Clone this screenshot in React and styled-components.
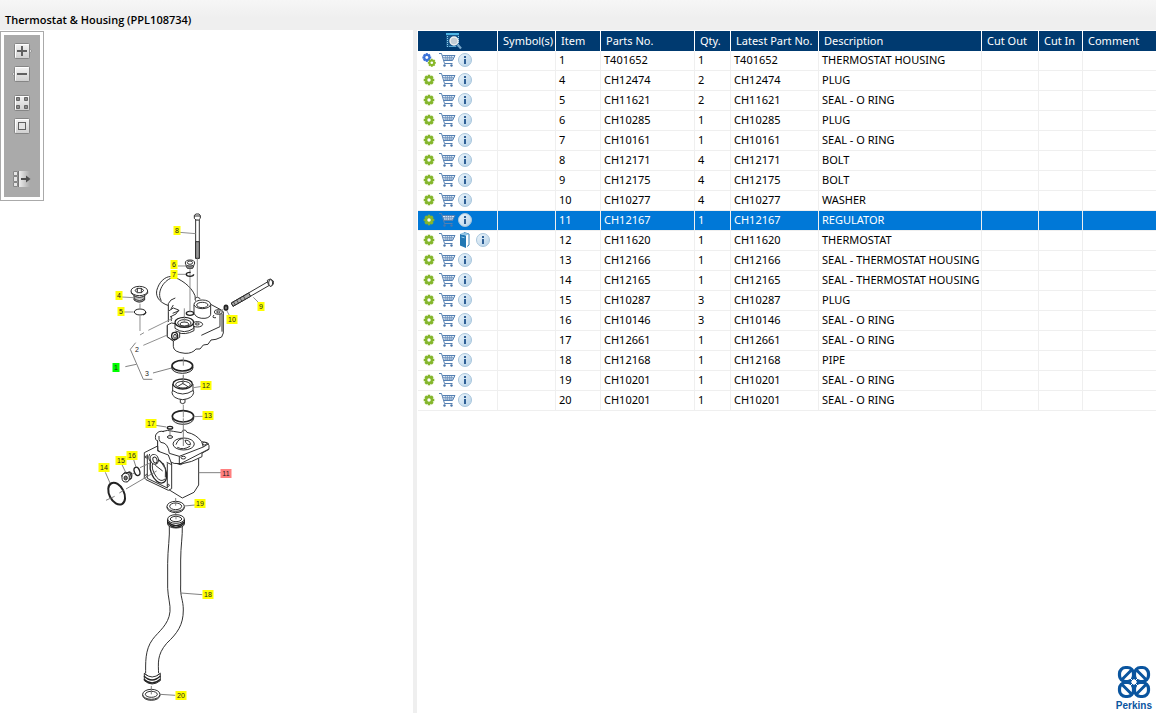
import React, { useState } from "react";
import styled, { createGlobalStyle } from "styled-components";

const GlobalStyle = createGlobalStyle`
  * {
    box-sizing: border-box;
  }

  body {
    margin: 0;
    background: #fff;
    color: #000;
    font-family: "Noto Sans", "Open Sans", sans-serif;
    font-size: 11px;
  }
`;

const Page = styled.div`
  min-height: 100vh;
  display: flex;
  flex-direction: column;
`;

const TitleBar = styled.header`
  height: 30px;
  padding: 10px 5px 0;
  background: linear-gradient(to bottom, #f6f6f6, #efefef 60%);
`;

const Title = styled.h1`
  margin: 0;
  font-family: "Open Sans", "Noto Sans", sans-serif;
  font-size: 11px;
  font-weight: 600;
  line-height: 20px;
  white-space: nowrap;
`;

const Main = styled.main`
  flex: 1;
  display: flex;
`;

const DrawingPane = styled.section`
  flex: 0 0 417px;
  display: flex;
  align-items: flex-start;
  border-right: 4px solid #efefef;
`;

const Toolbar = styled.div`
  width: 44px;
  flex: none;
  margin-top: 1px;
  padding: 3px;
  border: 1px solid #aaa;
  background: #fff;
`;

const ToolbarInner = styled.div`
  min-height: 162px;
  padding: 6px 0 8px;
  display: flex;
  flex-direction: column;
  align-items: center;
  gap: 9px;
  background: #aaa;
`;

const ToolGroup = styled.div`
  display: flex;
  flex-direction: column;
  gap: 3px;
  margin-top: ${props => (props.$last ? "auto" : "0")};
`;

const IconButton = styled.button`
  width: ${props => props.$size}px;
  height: ${props => props.$size}px;
  padding: 0;
  border: 0;
  background: none;
  display: flex;
  align-items: center;
  justify-content: center;
  cursor: pointer;

  svg {
    display: block;
    overflow: visible;
  }
`;

const Drawing = styled.svg`
  display: block;
  flex: 1;
  min-width: 0;
`;

const ListPane = styled.section`
  flex: 1;
  min-width: 0;
  padding: 1px 0 0 1px;
  display: flex;
  flex-direction: column;
  justify-content: space-between;
`;

const Table = styled.table`
  width: 100%;
  table-layout: fixed;
  border-collapse: separate;
  border-spacing: 0;
`;

const Col = styled.col`
  width: ${props => (props.$width ? `${props.$width}px` : "auto")};
`;

const HeadCell = styled.th`
  height: 20px;
  padding: 0 0 0 5px;
  border-right: 1px solid #fff;
  background: #003a70;
  color: #fff;
  font-weight: 400;
  line-height: 20px;
  text-align: left;
  white-space: nowrap;

  &:last-child {
    border-right: 0;
  }
`;

const HeadIcon = styled.div`
  display: flex;
  justify-content: center;
  padding-right: 12px;
`;

const Row = styled.tr`
  background: ${props => (props.$selected ? "#0078d7" : "#fff")};
  color: ${props => (props.$selected ? "#fff" : "#000")};
  cursor: default;
`;

const Cell = styled.td`
  height: 20px;
  padding: 0 0 0 3px;
  border-right: 1px solid #efefef;
  border-bottom: 1px solid #efefef;
  line-height: 18px;
  vertical-align: top;
  white-space: nowrap;

  &:last-child {
    border-right: 0;
  }
`;

const Actions = styled.div`
  display: flex;
  height: 19px;
  margin-left: -1px;
`;

const Brand = styled.footer`
  align-self: flex-end;
  display: flex;
  flex-direction: column;
  align-items: center;
  padding-right: 4px;
  color: #0a559f;
  font-family: "Liberation Sans", Arial, sans-serif;
  font-size: 10px;
  font-weight: 700;
  line-height: 14px;
`;

const columns = [
  { label: "Symbol(s)", width: 58 },
  { label: "Item", width: 45 },
  { label: "Parts No.", width: 94 },
  { label: "Qty.", width: 36 },
  { label: "Latest Part No.", width: 88 },
  { label: "Description", width: 163 },
  { label: "Cut Out", width: 57 },
  { label: "Cut In", width: 44 },
  { label: "Comment" },
];

const parts = [
  { item: 1, no: "T401652", qty: 1, desc: "THERMOSTAT HOUSING", assembly: true },
  { item: 4, no: "CH12474", qty: 2, desc: "PLUG" },
  { item: 5, no: "CH11621", qty: 2, desc: "SEAL - O RING" },
  { item: 6, no: "CH10285", qty: 1, desc: "PLUG" },
  { item: 7, no: "CH10161", qty: 1, desc: "SEAL - O RING" },
  { item: 8, no: "CH12171", qty: 4, desc: "BOLT" },
  { item: 9, no: "CH12175", qty: 4, desc: "BOLT" },
  { item: 10, no: "CH10277", qty: 4, desc: "WASHER" },
  { item: 11, no: "CH12167", qty: 1, desc: "REGULATOR" },
  { item: 12, no: "CH11620", qty: 1, desc: "THERMOSTAT", book: true },
  { item: 13, no: "CH12166", qty: 1, desc: "SEAL - THERMOSTAT HOUSING" },
  { item: 14, no: "CH12165", qty: 1, desc: "SEAL - THERMOSTAT HOUSING" },
  { item: 15, no: "CH10287", qty: 3, desc: "PLUG" },
  { item: 16, no: "CH10146", qty: 3, desc: "SEAL - O RING" },
  { item: 17, no: "CH12661", qty: 1, desc: "SEAL - O RING" },
  { item: 18, no: "CH12168", qty: 1, desc: "PIPE" },
  { item: 19, no: "CH10201", qty: 1, desc: "SEAL - O RING" },
  { item: 20, no: "CH10201", qty: 1, desc: "SEAL - O RING" },
];

// callout centres on the drawing
const callouts = [
  { n: 8, x: 177, y: 231 },
  { n: 6, x: 174, y: 265 },
  { n: 7, x: 174, y: 275 },
  { n: 4, x: 119, y: 296 },
  { n: 5, x: 121, y: 312 },
  { n: 9, x: 261, y: 307 },
  { n: 10, x: 232, y: 320 },
  { n: 12, x: 206, y: 386 },
  { n: 13, x: 208, y: 416 },
  { n: 17, x: 151, y: 424 },
  { n: 16, x: 132, y: 456 },
  { n: 15, x: 121, y: 461 },
  { n: 14, x: 104, y: 468 },
  { n: 19, x: 200, y: 504 },
  { n: 18, x: 208, y: 595 },
  { n: 20, x: 181, y: 696 },
  { n: 1, x: 116, y: 368, color: "#00ff00" },
  { n: 11, x: 226, y: 474, color: "#ff7f7f" },
];

/* toolbar icons */

function ToolIcon({ kind }) {
  return (
    <svg width="20" height="20" viewBox="0 0 20 20">
      <defs>
        <linearGradient id={`tool-${kind}`} x1="0" y1="0" x2="0" y2="1">
          <stop offset="0" stopColor="#f4f4f4" />
          <stop offset="1" stopColor="#cfcfcf" />
        </linearGradient>
        <linearGradient id="tool-fade">
          <stop offset="0" stopColor="#f4f4f4" />
          <stop offset="1" stopColor="#aaa" />
        </linearGradient>
      </defs>
      {kind !== "list" && (
        <>
          {kind === "plus" && <path d="M17 7.500l3 2.500-3 2.500z" fill="#eee" stroke="#888" strokeWidth=".8" />}
          {kind === "minus" && <path d="M3 7.500L0 10l3 2.500z" fill="#eee" stroke="#888" strokeWidth=".8" />}
          <rect x="2.500" y="2.500" width="15" height="15" rx="1" fill={`url(#tool-${kind})`} stroke="#858585" />
          <path d="M3.500 16.500v-13h13" fill="none" stroke="#fff" />
        </>
      )}
      {kind === "plus" && <path d="M5 10h10M10 5v10" stroke="#606060" strokeWidth="2" />}
      {kind === "minus" && <path d="M5 10h10" stroke="#606060" strokeWidth="2" />}
      {kind === "tiles" && (
        <g fill="#8a8a8a" stroke="#666">
          <path d="M4.500 4.500h3v3h-3zM12.500 4.500h3v3h-3zM4.500 12.500h3v3h-3zM12.500 12.500h3v3h-3z" />
        </g>
      )}
      {kind === "fit" && <rect x="6.500" y="6.500" width="7" height="7" fill="#e4e4e4" stroke="#606060" />}
      {kind === "list" && (
        <>
          <rect x="6" y="2" width="12" height="16" fill="url(#tool-fade)" />
          <path d="M1.500 2.500h4v4h-4zM1.500 7.500h4v5h-4zM1.500 13.500h4v4h-4z" fill="#e6e6e6" stroke="#888" />
          <path d="M6.500 2v16" stroke="#777" />
          <path d="M9 10h7" stroke="#505050" strokeWidth="2" />
          <path d="M14 6.500l4.500 3.500-4.500 3.500z" fill="#505050" />
        </>
      )}
    </svg>
  );
}

/* row icons */

function Gear({ cx, cy, r, color }) {
  return (
    <g transform={`translate(${cx} ${cy})`}>
      {[0, 45, 90, 135].map(a => (
        <rect key={a} x={-r * 0.24} y={-r} width={r * 0.48} height={r * 2} fill={color} transform={`rotate(${a})`} />
      ))}
      <circle r={r * 0.78} fill={color} />
      <circle r={r * 0.33} fill="#fff" />
    </g>
  );
}

function GearIcon({ assembly }) {
  return (
    <svg width="18" height="18" viewBox="0 0 18 18">
      {assembly ? (
        <>
          <Gear cx={6.8} cy={6.5} r={4.4} color="#3a72d8" />
          <Gear cx={11.8} cy={11.8} r={4} color="#86b728" />
        </>
      ) : (
        <Gear cx={9} cy={9} r={5.3} color="#84b62c" />
      )}
    </svg>
  );
}

function CartIcon() {
  return (
    <svg width="18" height="18" viewBox="0 0 18 18">
      <path d="M4.500 4.500h12L14.500 9.500h-8z" fill="#dbe6f2" />
      <path
        d="M5 6.500h10.500M6 8h9M7.500 4.500l.5 5M9.500 4.500v5M11.500 4.500v5M13.500 4.500l-.5 5"
        stroke="#6a8fbc"
        strokeWidth=".7"
        fill="none"
      />
      <path
        d="M1 2.500h2.500L6.500 12.500h8M4.500 4.500h12.500L14.500 9.500H6"
        fill="none"
        stroke="#5580b2"
      />
      <circle cx="6.500" cy="14.500" r="1.200" fill="#4a76aa" />
      <circle cx="13.500" cy="14.500" r="1.200" fill="#4a76aa" />
    </svg>
  );
}

function InfoIcon() {
  return (
    <svg width="18" height="18" viewBox="0 0 18 18">
      <defs>
        <linearGradient id="info-fill" x1="0" y1="0" x2="1" y2="1">
          <stop offset="0" stopColor="#eef6fc" />
          <stop offset="1" stopColor="#b4d1e7" />
        </linearGradient>
      </defs>
      <circle cx="9" cy="9" r="6.500" fill="url(#info-fill)" stroke="#a9c6dc" />
      <path d="M8 5h2v2H8zM8 8h2v5H8z" fill="#2f6096" />
    </svg>
  );
}

function BookIcon() {
  return (
    <svg width="18" height="18" viewBox="0 0 18 18">
      <path d="M8 1.500l5 1.500v11l-2 1.500" fill="#fff" stroke="#3f86b8" />
      <path d="M4 3l6 1.500V17l-6-2.500z" fill="#2278b4" />
      <path d="M4 3l3.500-1.500L13 3l-3 1.500z" fill="#8fc3e4" />
      <path d="M5.500 6l3 .8" stroke="#9bd0f0" />
    </svg>
  );
}

function SearchListIcon() {
  return (
    <svg width="16" height="18" viewBox="0 0 16 18">
      <path d="M0 1h13v2H0z" fill="#4db4e4" />
      <path d="M0 3h13v12H0z" fill="#17568a" />
      <path d="M1.500 4v11M12.500 4v11" stroke="#8fd0f0" strokeDasharray="1 1" />
      <path d="M3 14.500h7" stroke="#5aa8d4" />
      <circle cx="8" cy="9" r="4" fill="#c4ced6" stroke="#f0f0f0" strokeWidth="1.400" />
      <path d="M11.500 12.500l3.500 4" stroke="#7aa9cc" strokeWidth="2.200" />
    </svg>
  );
}

function Knot() {
  return (
    <svg width="34" height="34" viewBox="0 0 34 34" fill="none" stroke="#0a559f" strokeWidth="3.200">
      <rect x="2.500" y="2.500" width="14" height="14" rx="6" />
      <rect x="17.500" y="2.500" width="14" height="14" rx="6" />
      <rect x="2.500" y="17.500" width="14" height="14" rx="6" />
      <rect x="17.500" y="17.500" width="14" height="14" rx="6" />
      <path d="M5 14.500L14.500 5M19.500 5l9.500 9.500M5 19.500l9.500 9.500M19.500 29l9.500-9.500" strokeWidth="3" />
      <path d="M17 14l3 3-3 3-3-3z" fill="#fff" stroke="none" />
      <path d="M12 12l10 10M22 12L12 22" stroke="#fff" strokeWidth="1" />
    </svg>
  );
}

/* exploded view; each assembly is drawn at three times its size */

function UpperAssembly() {
  return (
    <g transform="translate(90 205) scale(0.3333)">
      {/* elbow and housing */}
      <path d="M236 302C205 292 193 270 203 248C212 224 232 212 247 215C270 221 304 243 315 272L318 300L318 390H236z" />
      <path d="M214 287C198 262 222 222 252 217" />
      <path d="M235 395V296Q240 283 256 279M244 365V310L250 300" />
      <path d="M236 318L250 309L266 315L258 327L240 336M248 325L268 317" />
      <path
        d="M318 285L334 288L372 303L392 314L400 320V384L395 396L378 403L363 405L354 418L340 420L330 432L318 432Q307 446 285 445Q250 442 250 424V408L232 396V352L258 344L270 316z"
        stroke="none"
      />
      <path d="M362 298L392 314L400 320V384L395 396L378 403L363 405L354 418L340 420L330 432L318 432Q307 446 285 445Q250 442 250 424V408L232 396V360Q245 350 256 356" />
      <path d="M390 325V365L334 391M396 326V380M372 330Q364 340 378 338M262 382Q285 392 312 377V360" />
      <path d="M312 300V325Q320 342 345 340Q360 338 362 328V298" />
      <ellipse cx="337" cy="298" rx="25" ry="13" />
      <ellipse cx="337" cy="300" rx="17" ry="8" />
      <path d="M317 287Q312 278 323 277L331 281" />
      <ellipse cx="385" cy="321" rx="12" ry="7" />
      <ellipse cx="385" cy="321" rx="5" ry="3" />
      <ellipse cx="300" cy="325" rx="11" ry="6" strokeWidth="4" />
      <ellipse cx="322" cy="358" rx="16" ry="8" />
      <ellipse cx="322" cy="357" rx="6" ry="3" />
      <path d="M255 354V370Q283 390 311 370V354" />
      <ellipse cx="283" cy="352" rx="28" ry="15" strokeWidth="4" />
      <ellipse cx="283" cy="354" rx="20" ry="10" />
      <ellipse cx="283" cy="357" rx="13" ry="6" />
      <path d="M232 362V395L250 408L269 397V382L256 378" />
      <ellipse cx="254" cy="393" rx="9" ry="11" strokeWidth="4" />
      <ellipse cx="255" cy="394" rx="4" ry="6" />

      {/* 8 */}
      <path d="M317 44H328V160H317z" />
      <path d="M317 110H328V160H317z" fill="#999" />
      <path d="M313 31L318 27H327L331 32V40L326 45H318L313 40zM313 33H331" />
      <path d="M322 160V278M269 82L317 86" stroke="#888" />

      {/* 6, 7 */}
      <path d="M287 181L292 190H308L312 181" fill="#999" />
      <ellipse cx="300" cy="174" rx="14" ry="9" />
      <ellipse cx="300" cy="173" rx="8" ry="5" />
      <path d="M264 183H288M262 208H288M300 192V322M283 310V354" stroke="#888" />
      <ellipse cx="300" cy="208" rx="11" ry="6" strokeWidth="4" strokeDasharray="42 14" fill="none" />

      {/* 4, 5 */}
      <path d="M132 270V285Q148 298 164 285V270" fill="#aaa" />
      <path d="M133 281Q148 291 163 281" />
      <path d="M124 259V265Q148 290 173 265V259" />
      <ellipse cx="148" cy="258" rx="25" ry="14" />
      <path d="M135 257L141 250H154L161 256L155 263H142zM142 250V262M154 250V263" />
      <ellipse cx="150" cy="321" rx="17" ry="9" strokeWidth="5" strokeDasharray="12 72 8" strokeDashoffset="0" />
      <ellipse cx="150" cy="321" rx="17" ry="9" strokeWidth="3" />
      <path d="M95 276L130 278M101 321H131M150 296V312M150 333V378M150 390L162 383M175 376L248 340M160 421L232 390" stroke="#888" />

      {/* 9, 10 */}
      <path d="M534 230L424 294L429 304L540 240z" />
      <path d="M476 264L424 294L429 304L482 274z" fill="#aaa" />
      <path d="M440 285l6 10M450 279l6 10M460 273l6 10M430 290l6 10" strokeWidth="2" />
      <path d="M532 226L541 222L550 228V238L542 244L535 239z" />
      <ellipse cx="542" cy="234" rx="6" ry="10" />
      <ellipse cx="408" cy="308" rx="5" ry="7" strokeWidth="5" fill="#888" />
      <path d="M490 277L505 292M411 318L418 331M400 313L388 320" stroke="#888" />
    </g>
  );
}

function MiddleAssembly() {
  return (
    <g transform="translate(90 310) scale(0.3333)">
      {/* 1 bracket */}
      <path d="M137 98L121 118L160 208H187M106 170L139 163M189 189L245 174" stroke="#777" fill="none" />

      {/* 3 */}
      <ellipse cx="277" cy="173" rx="32" ry="17" strokeWidth="3" />
      <ellipse cx="277" cy="167" rx="31" ry="16" strokeWidth="5" />
      <path d="M280 142V167M280 194V225" stroke="#888" />

      {/* 12 */}
      <path d="M271 266V278Q278 284 285 278V266" />
      <path d="M248 222V240L246 248Q248 266 278 269Q308 266 311 248L309 240V222" />
      <path d="M247 241Q278 263 310 241" />
      <ellipse cx="278" cy="222" rx="29" ry="15" strokeWidth="4" />
      <ellipse cx="279" cy="224" rx="22" ry="10" />
      <path d="M262 230L279 220L295 231M279 220V212" />
      <path d="M280 195V225M280 284V325M311 233L337 229" stroke="#888" />

      {/* 13 */}
      <ellipse cx="279" cy="325" rx="32" ry="18" strokeWidth="3" />
      <ellipse cx="279" cy="319" rx="32" ry="17" strokeWidth="5" />
      <path d="M280 302V322M311 320L340 319" stroke="#888" />
    </g>
  );
}

function LowerAssembly() {
  return (
    <g transform="translate(90 410) scale(0.3333)">
      {/* 11 */}
      <path d="M230 150V235L277 264L312 247L326 225V145z" />
      <path d="M203 118V83Q200 70 215 65Q232 58 250 64L274 68L280 60Q288 58 291 67Q318 72 335 95L352 98L357 107V118L272 164L232 152z" />
      <path d="M203 118V92Q194 92 197 75Q205 60 222 65M207 78Q205 90 212 97Q235 98 238 130L268 139L340 111L335 95M340 111L356 101M268 139V163L357 117M232 138V152Q270 176 336 140V128" />
      <ellipse cx="281" cy="102" rx="32" ry="18" />
      <path d="M258 104Q265 84 281 86M285 91Q298 88 302 103Q290 108 285 91M262 112Q281 122 301 108" />
      <ellipse cx="280" cy="143" rx="7" ry="4" />
      <ellipse cx="344" cy="101" rx="6" ry="4" />
      <path d="M163 128L203 108V123L235 135L245 162V236L235 241L168 209L163 203z" />
      <path d="M172 133V205L232 234V160M245 164L230 157M179 132Q172 148 184 158" />
      <ellipse cx="205" cy="183" rx="22" ry="38" transform="rotate(-22 205 183)" strokeWidth="4" />
      <path d="M190 155Q180 175 200 202Q213 218 225 207M196 166L218 183M220 160Q230 178 226 202" />
      <ellipse cx="193" cy="148" rx="12" ry="15" transform="rotate(-20 193 148)" />
      <ellipse cx="195" cy="150" rx="6" ry="9" transform="rotate(-20 195 150)" />
      <circle cx="169" cy="141" r="3" />
      <circle cx="170" cy="196" r="3" />
      <circle cx="235" cy="226" r="3" />
      <path d="M280 25V108M326 188H394M240 60V76" stroke="#777" />

      {/* 17 */}
      <ellipse cx="240" cy="53" rx="8" ry="4" strokeWidth="4" />
      <ellipse cx="240" cy="81" rx="8" ry="4" strokeWidth="3" />
      <path d="M197 46L229 51" stroke="#777" />

      {/* 14, 15, 16 */}
      <ellipse cx="80" cy="251" rx="22" ry="35" transform="rotate(-27 80 251)" strokeWidth="6" fill="none" />
      <path d="M48 271L74 259M88 249L101 241M108 237L200 183" stroke="#777" />
      <ellipse cx="118" cy="197" rx="8" ry="12" fill="#aaa" />
      <path d="M95 196L104 187L120 188L125 202L112 216L100 212z" fill="#aaa" />
      <ellipse cx="107" cy="203" rx="11" ry="13" />
      <ellipse cx="107" cy="204" rx="5" ry="6" fill="#777" />
      <ellipse cx="141" cy="184" rx="8" ry="13" transform="rotate(-20 141 184)" strokeWidth="4" />
      <path d="M125 193L133 189M150 173L182 158M46 187L60 219M96 164L107 187M131 149L138 171" stroke="#777" />

      {/* 19 */}
      <ellipse cx="257" cy="292" rx="26" ry="16" />
      <ellipse cx="257" cy="289" rx="26" ry="15" />
      <ellipse cx="257" cy="289" rx="18" ry="10" />
      <path d="M257 264V287M257 307V330M283 288L316 285" stroke="#777" />
    </g>
  );
}

function Pipe() {
  return (
    <g transform="translate(90 510) scale(0.3333)">
      <path
        d="M238 45C240 80 233 120 233 160V235C234 262 242 285 240 305C236 345 205 365 188 388C164 420 167 460 167 495H206C205 460 200 435 230 400C262 370 280 345 280 300C280 270 270 260 272 225V150C272 110 278 80 277 45z"
      />
      <ellipse cx="258" cy="42" rx="25" ry="12" />
      <path d="M233 28V40Q258 64 283 40V28" strokeWidth="4" />
      <path d="M234 36Q258 58 282 36" strokeWidth="4" />
      <ellipse cx="258" cy="27" rx="25" ry="13" />
      <ellipse cx="258" cy="27" rx="17" ry="8" />
      <path d="M163 490V512Q186 532 211 512V490Q186 512 163 490" />
      <path d="M162 498Q186 522 211 498M162 508Q186 530 211 508" strokeWidth="4" />
      <path d="M163 490Q186 512 211 490" />
      <ellipse cx="184" cy="556" rx="26" ry="15" />
      <ellipse cx="184" cy="553" rx="26" ry="15" />
      <ellipse cx="184" cy="553" rx="18" ry="9" />
      <path d="M258 12V28M184 528V553M272 249L337 254M210 553L256 556" stroke="#777" />
    </g>
  );
}

function ExplodedView() {
  return (
    <Drawing viewBox="44 30 369 683" role="img" aria-label="Exploded view">
      <g fill="#fff" stroke="#222" strokeWidth="2.800" strokeLinejoin="round">
        <UpperAssembly />
        <MiddleAssembly />
        <LowerAssembly />
        <Pipe />
      </g>
      <g fontFamily="Liberation Sans, Arial, sans-serif" fontSize="7" textAnchor="middle" fill="#222">
        {callouts.map(({ n, x, y, color }) => {
          const w = n > 9 ? 11 : 7;
          return (
            <g key={n}>
              <rect x={x - w / 2} y={y - 5} width={w} height="9" fill={color || "#ffff00"} />
              <text x={x} y={y + 2}>{n}</text>
            </g>
          );
        })}
        <text x="137" y="352">2</text>
        <text x="147" y="376">3</text>
      </g>
    </Drawing>
  );
}

export default function App() {
  const [selected, setSelected] = useState(11);

  return (
    <Page>
      <GlobalStyle />
      <TitleBar>
        <Title>Thermostat &amp; Housing (PPL108734)</Title>
      </TitleBar>
      <Main>
        <DrawingPane>
          <Toolbar>
            <ToolbarInner>
              <ToolGroup>
                <IconButton $size={20} aria-label="Zoom in"><ToolIcon kind="plus" /></IconButton>
                <IconButton $size={20} aria-label="Zoom out"><ToolIcon kind="minus" /></IconButton>
              </ToolGroup>
              <ToolGroup>
                <IconButton $size={20} aria-label="Tiles"><ToolIcon kind="tiles" /></IconButton>
                <IconButton $size={20} aria-label="Fit"><ToolIcon kind="fit" /></IconButton>
              </ToolGroup>
              <ToolGroup $last>
                <IconButton $size={20} aria-label="Toggle list"><ToolIcon kind="list" /></IconButton>
              </ToolGroup>
            </ToolbarInner>
          </Toolbar>
          <ExplodedView />
        </DrawingPane>
        <ListPane>
          <Table>
            <colgroup>
              <Col $width={80} />
              {columns.map(col => (
                <Col key={col.label} $width={col.width} />
              ))}
            </colgroup>
            <thead>
              <tr>
                <HeadCell aria-label="Actions">
                  <HeadIcon><SearchListIcon /></HeadIcon>
                </HeadCell>
                {columns.map(col => (
                  <HeadCell key={col.label}>{col.label}</HeadCell>
                ))}
              </tr>
            </thead>
            <tbody>
              {parts.map(part => (
                <Row key={part.item} $selected={part.item === selected} onClick={() => setSelected(part.item)}>
                  <Cell>
                    <Actions>
                      <IconButton $size={18} aria-label="Part"><GearIcon assembly={part.assembly} /></IconButton>
                      <IconButton $size={18} aria-label="Add to cart"><CartIcon /></IconButton>
                      {part.book && <IconButton $size={18} aria-label="Manual"><BookIcon /></IconButton>}
                      <IconButton $size={18} aria-label="Information"><InfoIcon /></IconButton>
                    </Actions>
                  </Cell>
                  <Cell />
                  <Cell>{part.item}</Cell>
                  <Cell>{part.no}</Cell>
                  <Cell>{part.qty}</Cell>
                  <Cell>{part.no}</Cell>
                  <Cell>{part.desc}</Cell>
                  <Cell />
                  <Cell />
                  <Cell />
                </Row>
              ))}
            </tbody>
          </Table>
          <Brand>
            <Knot />
            Perkins
          </Brand>
        </ListPane>
      </Main>
    </Page>
  );
}
